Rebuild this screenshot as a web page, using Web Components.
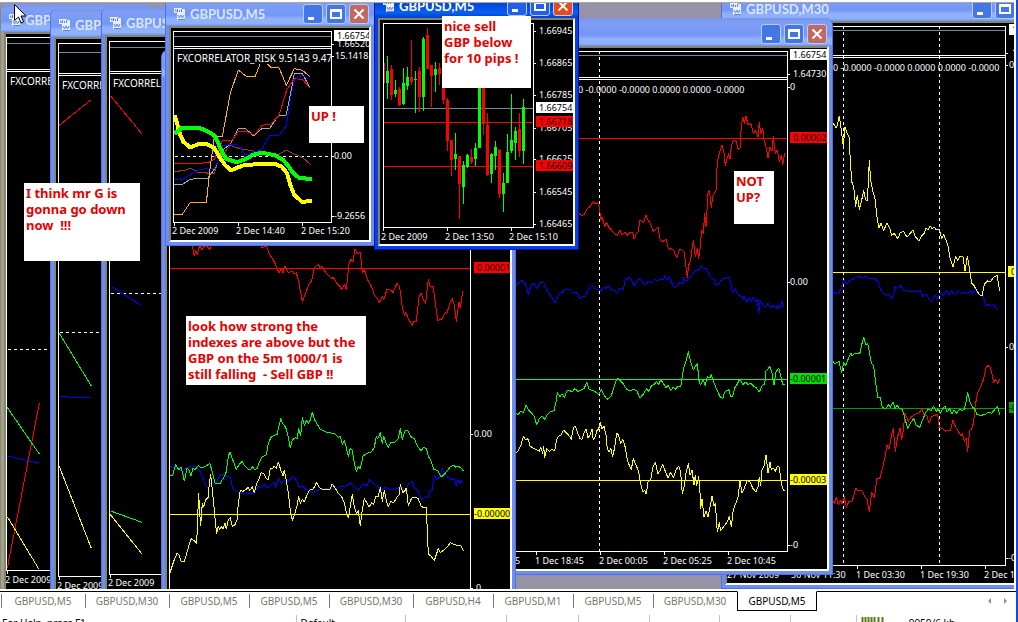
<!DOCTYPE html>
<html lang="en">
<head>
<meta charset="utf-8">
<title>Terminal</title>
<style>
	body {
		margin: 0;
		overflow: hidden;
		background: white;
		font-family: 'Noto Sans', 'Open Sans', sans-serif;
		font-size: 10px;
	}
</style>
</head>
<body>
<terminal-app></terminal-app>

<script>
const RED = '#ff0000';
const GREEN = '#00ff00';
const BLUE = '#0000ff';
const YELLOW = '#ffff00';
const SLATE = '#778899';

// points are in thirds of a pixel, counted from the origin ox,oy
function line(color, ox, oy, points, width = 1) {
	const path = points
		.trim()
		.split(/\s+/)
		.map((p) => {
			const [x, y] = p.split(',').map(Number);
			return `${(ox + x / 3).toFixed(1)},${(oy + y / 3).toFixed(1)}`;
		})
		.join(' ');
	return { color, path, width };
}

// plot: left, top, right, bottom of the framed area. split: y of the bar between the panes
const charts = {
	left1: {
		plot: [6, 37, 160, 570], split: 69, price: 43,
		header: [10, 82, 'FXCORRELATOR_RISK', 10],
		dashed: [349],
		dates: [[5, 580, '2 Dec 2009']],
		ticks: [7],
		lines: [
			line(RED, 0, 310, '22,775 118,280'),
			line(GREEN, 0, 310, '20,290 118,432'),
			line(BLUE, 0, 310, '22,438 120,460'),
			line(YELLOW, 0, 310, '22,620 117,778'),
		],
	},
	left2: {
		plot: [58, 43, 170, 576], split: 73, price: 52,
		header: [62, 86, 'FXCORRELATOR_RISK', 10],
		dashed: [332],
		dates: [[57, 586, '2 Dec 2009']],
		ticks: [59],
		lines: [
			line(RED, 0, 0, '178,376 272,300'),
			line(GREEN, 0, 310, '178,70 274,228'),
			line(BLUE, 0, 310, '178,260 274,264'),
			line(YELLOW, 0, 310, '176,465 274,715'),
		],
	},
	left3: {
		plot: [109, 41, 190, 574], split: 71, price: 47,
		header: [113, 84, 'FXCORRELATOR_RISK', 10],
		dashed: [293],
		dates: [[108, 583, '2 Dec 2009']],
		ticks: [110],
		lines: [
			line(RED, 0, 0, '332,288 426,402'),
			line(BLUE, 0, 0, '332,858 424,916'),
			line(GREEN, 0, 310, '332,603 426,637'),
			line(YELLOW, 0, 310, '328,610 426,732'),
		],
	},
	indexes: {
		plot: [169, 90, 470, 620],
		levels: [[268, RED], [514, YELLOW]],
		labels: [
			[473, 268, '0.00001', RED],
			[470, 434, '0.00'],
			[473, 514, '-0.00000', YELLOW],
			[472, 588, '0'],
		],
		lines: [
			line(RED, 165, 240, '82,15 88,48 92,30 97,44 104,14 110,30 120,15 135,28 140,12 160,-20 270,-20 285,10 290,22 306,20 312,40 325,60 332,75 342,98 348,88 354,98 360,78 370,98 382,94 388,102 394,98 402,130 412,184 422,160 432,132 440,122 448,84 456,76 461,74 466,84 470,78 482,98 500,116 505,112 515,130 524,138 530,150 538,132 544,148 552,72 558,58 564,66 570,26 578,42 586,36 592,98 598,88 608,120 620,140 628,165 636,174 644,188 652,168 656,180 666,148 676,150 684,158 696,130 704,142 712,200 718,226 722,218 732,240 742,256 746,244 754,246 762,172 768,160 774,178 782,190 790,118 796,140 804,138 810,180 818,242 832,236 840,218 846,220 854,190 862,176 868,196 874,244 882,186 886,204 893,154'),
			line(BLUE, 165, 400, '15,200 24,202 32,208 44,204 52,212 60,206 70,202 80,198 92,198 104,212 112,230 120,250 128,264 136,250 146,256 156,244 164,226 174,222 186,228 196,232 202,258 206,270 216,274 224,280 234,282 246,278 258,282 268,276 280,260 290,262 298,254 306,264 316,258 326,246 332,262 340,236 350,250 360,240 366,248 374,240 384,228 396,242 402,262 412,258 420,266 430,272 444,278 456,272 468,268 484,266 500,268 516,264 528,258 538,260 546,256 556,248 564,258 572,262 580,272 590,256 598,252 606,258 612,238 622,246 630,256 640,260 650,272 660,262 674,268 690,268 702,262 714,268 722,276 730,252 742,244 748,264 756,268 764,286 772,300 780,290 788,294 796,272 802,268 808,226 816,240 824,230 832,206 840,222 848,232 858,238 866,236 874,256 880,238 884,250 888,240 892,248'),
			line(GREEN, 165, 400, '15,225 22,228 32,194 42,210 48,200 58,243 66,205 72,210 78,228 84,203 90,210 100,196 108,204 124,198 134,190 142,215 150,250 164,252 178,230 184,215 190,170 195,155 202,176 214,208 224,192 232,184 238,196 248,206 256,210 262,200 268,208 276,206 282,190 290,172 298,168 304,164 310,130 318,112 326,106 336,104 347,56 354,72 362,82 370,112 376,144 382,120 392,112 396,118 401,86 407,108 412,52 418,76 424,62 430,70 436,60 442,36 448,58 456,72 466,88 480,95 494,98 510,102 520,112 526,108 532,134 538,122 544,142 550,170 556,145 562,150 568,190 574,214 580,200 586,206 594,168 606,160 620,155 628,142 634,110 638,116 646,98 652,132 656,108 662,126 670,142 678,126 690,126 700,116 706,86 712,118 720,92 728,92 738,110 748,116 758,140 768,152 776,142 784,146 790,168 798,184 806,208 818,212 828,232 842,218 856,200 866,196 872,202 880,198 890,206 896,214'),
			line(YELLOW, 165, 400, '15,518 26,484 36,460 42,466 48,484 58,486 66,456 78,416 84,420 90,424 95,432 98,350 101,280 104,340 107,378 112,310 116,320 122,300 130,292 133,250 137,224 142,270 148,330 152,378 155,402 160,378 164,388 170,380 174,388 180,370 184,386 190,360 196,352 202,380 210,374 216,360 220,310 226,272 234,274 244,268 250,262 254,272 262,260 268,278 276,248 282,236 288,218 296,220 302,234 310,240 316,204 322,206 328,198 334,206 340,186 348,212 354,228 358,210 364,240 370,280 376,330 382,362 390,338 396,318 401,290 406,310 412,298 418,306 426,285 434,270 444,268 450,258 455,246 462,262 472,268 484,268 494,268 502,252 510,264 520,280 530,290 538,308 544,338 550,354 556,320 562,282 568,320 574,340 580,332 586,378 592,330 598,296 606,310 612,322 620,308 626,314 632,288 640,290 646,262 652,304 658,270 664,302 670,320 678,304 686,308 696,292 702,286 706,254 714,278 720,272 724,264 730,318 740,294 750,292 760,296 768,318 776,324 784,322 790,462 798,468 808,482 820,446 826,458 836,450 842,446 856,428 868,434 880,436 888,438 896,454'),
		],
	},
	risk: {
		plot: [173, 31, 331, 222], split: 46, price: 36,
		header: [177, 59, 'FXCORRELATOR_RISK 9.5143 9.4731', 10],
		dashed: [156],
		labels: [
			[333, 44, '1.66520'],
			[333, 36, '1.66754', 'white'],
			[331, 56, '15.1418'],
			[330, 156, '0.00'],
			[333, 216, '-9.2656'],
		],
		dates: [[172, 231, '2 Dec 2009'], [236, 231, '2 Dec 14:40'], [301, 231, '2 Dec 15:20']],
		ticks: [174, 238, 302],
		lines: [
			line('#8b4513', 165, 0, '28,514 60,512 76,504 100,518 148,520 160,480 196,436 220,445 260,452 300,462 342,463 364,450 388,462 412,472 437,494'),
			line('#a9a9a9', 165, 0, '28,553 52,553 76,538 100,535 128,535 150,505 172,450 196,433 220,386 242,386 266,408 290,386 315,384 342,345 364,345 388,222 412,220 435,264'),
			line(RED, 165, 0, '28,490 76,492 100,490 130,488 148,478 172,422 200,422 220,394 245,394 268,405 292,376 318,372 342,346 366,268 388,236 412,238 435,264'),
			line(BLUE, 165, 0, '28,538 52,538 76,524 100,510 128,505 148,505 160,480 172,436 218,433 242,466 266,456 290,448 315,405 342,405 364,378 376,300 388,240 410,226 435,238'),
			line('#ffb020', 165, 0, '28,643 52,643 76,607 124,609 136,500 148,410 172,410 196,280 220,210 245,230 270,230 285,193'),
			line('#ffb020', 165, 0, '308,193 318,203 342,203 364,256 388,206 412,211 435,230'),
			line(YELLOW, 165, 0, '28,345 35,365 42,395 55,425 75,442 100,433 124,432 148,443 160,466 180,495 198,511 220,502 240,494 330,492 350,500 366,520 376,555 388,585 412,606 440,602', 4),
			line(GREEN, 165, 0, '28,402 50,384 104,384 130,395 150,408 160,430 172,458 184,476 215,487 240,478 265,464 292,458 330,466 355,480 370,498 384,518 402,534 440,537', 4),
		],
	},
	candles: {
		plot: [383, 23, 533, 227],
		levels: [[108, SLATE], [122, RED], [166, RED]],
		labels: [
			[535, 31, '1.66945'],
			[535, 63, '1.66865'],
			[535, 95, '1.66785'],
			[535, 128, '1.66705'],
			[535, 159, '1.66625'],
			[535, 192, '1.66545'],
			[535, 224, '1.66465'],
			[535, 108, '1.66754', 'white'],
			[535, 122, '1.66718', RED],
			[535, 166, '1.66609', RED],
		],
		dates: [[381, 237, '2 Dec 2009'], [445, 237, '2 Dec 13:50'], [509, 237, '2 Dec 15:10']],
		ticks: [383, 447, 511],
		// x, high, low, body top, body bottom, rising
		candles: [
			[34, 176, 270, 190, 250, 0], [46, 168, 298, 214, 250, 1], [58, 195, 300, 207, 286, 0],
			[70, 240, 290, 270, 282, 1], [82, 262, 318, 268, 316, 0], [94, 204, 315, 250, 313, 1],
			[106, 202, 270, 230, 256, 1], [118, 120, 256, 230, 244, 0], [130, 212, 338, 238, 241, 1],
			[142, 200, 335, 213, 292, 0], [154, 110, 332, 116, 290, 1], [166, 85, 208, 104, 206, 0],
			[178, 195, 320, 195, 228, 0], [190, 186, 276, 207, 224, 1], [202, 188, 255, 205, 222, 0],
			[214, 220, 314, 250, 300, 0], [226, 295, 455, 300, 424, 0], [238, 420, 528, 420, 480, 0],
			[250, 398, 508, 462, 478, 1], [262, 468, 658, 468, 552, 0], [274, 484, 612, 494, 560, 1],
			[286, 462, 504, 464, 500, 1], [298, 448, 494, 472, 486, 0], [310, 430, 500, 444, 478, 1],
			[322, 200, 444, 200, 444, 1], [334, 200, 404, 200, 372, 0], [346, 338, 526, 375, 526, 0],
			[358, 460, 550, 462, 522, 1], [370, 422, 510, 440, 468, 1], [382, 448, 596, 450, 582, 0],
			[394, 520, 636, 548, 582, 1], [406, 402, 548, 456, 548, 1], [418, 282, 458, 420, 453, 1],
			[430, 380, 478, 392, 428, 1], [442, 338, 470, 386, 453, 0], [454, 298, 492, 322, 453, 1],
		],
		lines: [],
	},
	main: {
		plot: [420, 51, 787, 551], split: 77, price: 55,
		header: [578, 90, '0 -0.0000 -0.0000 0.0000 0.0000 -0.0000', 9],
		levels: [[138, RED], [379, GREEN], [480, YELLOW]],
		days: [599],
		labels: [
			[789, 55, '1.66754', 'white'],
			[789, 74, '1.64730'],
			[786, 87, '0'],
			[789, 138, '0.00002', RED],
			[786, 282, '0.00'],
			[789, 379, '-0.00001', '#00e000'],
			[789, 480, '-0.00003', YELLOW],
			[789, 545, '-0'],
		],
		dates: [[515, 561, '5'], [535, 561, '1 Dec 18:45'], [599, 561, '2 Dec 00:05'], [663, 561, '2 Dec 05:25'], [727, 561, '2 Dec 10:45']],
		ticks: [536, 600, 664, 728],
		lines: [
			line(RED, 510, 190, '206,70 214,76 222,74 232,56 240,50 250,34 256,42 262,38 268,50 272,90 276,80 284,110 290,96 296,112 304,120 312,130 322,136 330,120 336,136 344,126 352,136 360,128 368,128 372,148 378,132 384,126 390,90 396,92 400,98 408,76 414,90 422,102 430,124 438,118 444,112 450,148 456,156 462,152 468,148 474,172 480,180 484,174 492,184 500,204 508,180 514,178 522,186 528,230 532,262 536,226 542,210 546,178 550,152 556,200 562,176 566,206 572,160 574,122 580,130 584,70 588,110 594,10 598,0 604,54 608,20 618,0 622,-84 628,-110 636,-136 642,-112 646,-74 650,-90 656,-110 660,-92 664,-130 670,-150 678,-146 684,-122 690,-126 694,-190 698,-218 703,-200 708,-222 714,-196 722,-200 730,-170 738,-178 744,-160 748,-204 752,-168 758,-184 762,-150 768,-130 774,-96 780,-130 786,-116 790,-160 796,-110 802,-120 808,-84 814,-104 818,-76 824,-112'),
			line(BLUE, 510, 190, '16,292 24,280 36,272 46,282 56,314 62,286 72,280 80,296 92,276 102,278 112,304 122,316 130,332 136,338 142,324 148,306 156,308 164,298 174,300 182,298 190,310 202,306 210,328 218,318 226,320 234,300 246,284 256,296 264,300 274,302 280,292 288,296 296,288 302,298 314,302 322,310 328,296 340,298 346,270 356,262 364,268 372,288 382,272 392,264 398,278 406,284 414,274 424,278 434,268 444,272 452,268 460,270 464,256 472,270 476,260 484,276 492,292 500,290 510,276 516,282 520,262 526,274 536,268 548,252 556,240 564,242 572,226 580,236 588,234 596,250 604,266 612,268 618,284 626,284 636,266 648,264 658,262 662,282 668,308 674,296 682,310 690,316 698,328 702,318 710,336 718,322 724,336 730,322 736,336 742,328 746,372 750,330 758,344 766,352 774,340 782,354 790,346 798,358 804,344 808,356 814,350 816,332 822,352'),
			line(GREEN, 510, 370, '16,128 24,134 32,124 40,128 48,106 56,120 64,128 72,138 80,164 88,146 96,138 104,148 112,134 120,126 132,122 138,96 142,68 150,80 156,72 164,82 170,64 178,60 186,66 194,56 204,64 214,60 222,56 230,38 238,58 250,62 260,68 266,74 274,58 282,76 292,88 304,78 312,50 322,24 330,32 340,42 350,58 360,62 370,58 380,62 390,84 400,72 410,56 416,64 424,48 432,44 440,34 446,44 452,30 460,40 468,54 474,46 482,62 490,52 498,58 504,48 512,50 518,10 522,-8 528,-26 535,-55 542,-24 550,0 562,-20 568,40 572,44 580,30 586,46 592,20 600,24 604,14 612,38 620,58 630,80 638,86 644,66 650,62 656,58 662,80 668,78 674,54 682,42 690,26 698,44 706,36 714,44 722,40 730,48 738,52 748,66 756,48 764,42 768,4 774,-4 779,-10 786,8 792,44 798,6 806,-6 812,16 818,44 824,44'),
			line(YELLOW, 510, 370, '16,252 24,244 32,228 40,200 48,210 54,206 60,228 68,234 78,238 88,244 92,232 98,250 101,230 104,262 110,236 118,244 126,238 134,242 140,208 146,198 154,194 160,180 168,188 176,196 184,208 190,174 196,168 202,186 210,206 216,208 222,188 228,176 234,204 240,196 246,176 250,210 256,200 260,182 266,176 271,158 276,178 282,168 288,196 292,236 298,246 302,234 308,260 314,232 320,190 326,196 332,222 338,208 346,232 352,270 358,286 364,298 370,266 378,286 386,304 390,334 398,366 404,362 409,372 414,336 422,328 428,294 436,276 444,312 450,302 458,282 466,304 474,324 482,306 490,324 498,300 506,288 512,308 517,372 522,350 528,310 535,280 540,316 546,300 552,344 556,316 560,346 566,320 570,368 572,416 576,386 582,442 588,424 594,440 600,412 606,378 612,408 616,400 622,486 628,458 632,482 642,468 650,458 658,440 664,470 670,420 678,398 684,380 690,332 696,370 704,352 712,330 720,336 728,354 738,366 744,350 748,322 752,348 756,300 762,288 768,254 774,310 780,276 784,298 790,294 796,304 802,288 808,292 814,340 820,360 824,362'),
		],
	},
	half: {
		plot: [730, 26, 1005, 565], split: 55, price: 30,
		header: [833, 68, '0 -0.0000 -0.0000 0.0000 0.0000 -0.0000', 9],
		levels: [[272, YELLOW], [408, '#00a000']],
		days: [843, 939],
		labels: [
			[1008, 30, '1.66754', 'white'],
			[1008, 53, '1.64730'],
			[1005, 65, '0'],
			[1007, 272, '0.00001', YELLOW],
			[1005, 347, '0.00'],
			[1008, 408, '-0.00001', '#00a000'],
			[1007, 558, '-0'],
		],
		dates: [[727, 575, '27 Nov 2009'], [791, 575, '30 Nov 11:30'], [856, 575, '1 Dec 03:30'], [920, 575, '1 Dec 19:30'], [984, 575, '2 Dec 11:30']],
		ticks: [857, 921, 985],
		lines: [
			line(BLUE, 715, 0, '352,872 360,880 370,882 378,866 386,840 394,852 404,842 414,838 424,832 434,828 440,836 450,830 464,836 478,834 488,844 494,862 502,878 514,886 522,882 530,896 536,884 540,860 548,866 556,856 564,870 576,872 590,876 606,874 616,872 624,890 634,882 644,900 650,906 660,886 668,896 676,880 684,888 694,872 702,884 710,872 720,886 730,872 740,880 748,876 758,882 766,872 774,880 780,866 788,884 800,886 808,900 812,916 822,914 830,920 836,912 842,924 848,928'),
			line(RED, 715, 310, '352,570 358,580 364,562 370,584 376,570 382,582 388,560 394,592 402,574 410,576 416,560 422,534 428,542 440,540 450,562 456,566 463,606 470,546 478,564 486,504 494,506 502,478 510,440 516,404 522,418 530,372 535,356 541,424 548,380 555,354 560,388 565,362 570,310 580,334 590,320 602,312 612,310 620,296 628,316 636,318 642,340 650,320 660,316 668,312 673,352 682,356 692,364 700,360 706,362 714,330 722,352 730,364 738,378 742,370 748,394 753,384 758,424 764,360 770,358 776,336 780,290 788,248 798,228 806,206 812,176 818,166 826,172 832,196 836,218 842,208 848,220 854,208'),
			line(GREEN, 715, 310, '352,152 358,160 366,158 372,154 380,188 386,158 392,166 400,146 408,130 412,138 420,130 434,132 440,104 446,82 452,104 458,100 464,132 470,162 476,168 482,220 488,262 496,262 502,292 512,296 520,284 526,292 534,276 540,296 546,286 554,296 562,298 570,326 578,356 588,336 596,326 604,346 614,352 624,326 632,308 640,298 648,302 656,288 664,304 670,298 676,312 682,298 690,288 696,306 704,296 710,312 718,300 724,310 734,298 740,302 748,298 752,280 758,248 764,274 772,290 780,298 786,314 800,316 812,312 820,306 830,310 838,300 848,288 850,300 854,314'),
			line(YELLOW, 715, 0, '352,368 358,374 364,384 368,372 373,348 380,400 385,440 390,380 396,400 402,410 406,480 410,545 416,560 422,620 427,585 433,628 440,600 446,572 452,600 457,602 460,550 463,482 467,540 474,575 480,596 486,650 492,685 498,668 506,692 516,668 524,684 530,706 538,700 548,716 556,698 566,694 576,712 584,702 594,690 600,708 612,724 620,708 628,700 632,684 640,690 645,678 652,686 657,680 664,690 673,688 680,716 686,704 694,722 700,742 706,778 714,802 722,768 728,782 736,768 744,770 750,814 757,768 764,810 770,850 778,858 786,874 796,886 802,886 808,852 818,842 826,846 836,832 846,826 850,848 854,872'),
		],
	},
};

class PriceChart extends HTMLElement {
	constructor() {
		super();
		this.attachShadow({ mode: 'open' });
	}

	connectedCallback() {
		const chart = charts[this.getAttribute('chart')];
		this.shadowRoot.innerHTML = `
			<style>
				:host {
					display: block;
					height: 100%;
					overflow: hidden;
					background: black;
				}
				svg {
					display: block;
					shape-rendering: crispEdges;
				}
				text {
					font-size: 9px;
					fill: white;
				}
				.tag {
					fill: black;
				}
			</style>
			<svg width="100%" height="100%" viewBox="${this.getAttribute('view')}" preserveAspectRatio="xMinYMin slice">
				${this.#plot(chart)}
				${this.#axis(chart)}
			</svg>
			`;
	}

	#plot(chart) {
		const [left, top, right, bottom] = chart.plot;
		let out = '';
		(chart.levels || []).forEach(([y, color]) => {
			out += `<rect x="${left}" y="${y}" width="${right - left}" height="1" fill="${color}"/>`;
		});
		(chart.dashed || []).forEach((y) => {
			out += `<path d="M${left + 2} ${y}.5H${right}" stroke="white" stroke-dasharray="3 3"/>`;
		});
		(chart.days || []).forEach((x) => {
			out += `<path d="M${x}.5 ${top}V${bottom}" stroke="white" stroke-dasharray="3 3"/>`;
		});
		if (chart.price) {
			out += `<rect x="${left}" y="${chart.price}" width="${right - left}" height="1" fill="${SLATE}"/>`;
		}
		(chart.candles || []).forEach(([x, high, low, open, close, up]) => {
			const cx = Math.round(372 + x / 3);
			const color = up ? GREEN : RED;
			out += `<rect x="${cx}" y="${Math.round(high / 3)}" width="1" height="${Math.round((low - high) / 3)}" fill="${color}"/>`;
			out += `<rect x="${cx - 1}" y="${Math.round(open / 3)}" width="3" height="${Math.round((close - open) / 3)}" fill="${color}"/>`;
		});
		chart.lines.forEach(({ color, path, width }) => {
			out += `<polyline points="${path}" fill="none" stroke="${color}" stroke-width="${width}" stroke-linejoin="round"/>`;
		});
		if (chart.header) {
			const [x, y, text, size] = chart.header;
			out += `<text x="${x}" y="${y + 3}" style="font-size:${size}px">${text}</text>`;
		}
		// a nested svg keeps the drawing inside the frame
		return `<svg x="${left}" y="${top}" width="${right - left}" height="${bottom - top}" viewBox="${left} ${top} ${right - left} ${bottom - top}">${out}</svg>`;
	}

	#axis(chart) {
		const [left, top, right, bottom] = chart.plot;
		let out = `<path d="M${left}.5 ${top}.5H${right}.5V${bottom}.5H${left}.5Z" fill="none" stroke="white"/>`;
		if (chart.split) {
			out += `<rect x="${left}" y="${chart.split}" width="${right - left}" height="1" fill="white"/>`;
			out += `<rect x="${left}" y="${chart.split + 2}" width="${right - left}" height="1" fill="white"/>`;
		}
		(chart.ticks || []).forEach((x) => {
			out += `<rect x="${x}" y="${bottom}" width="1" height="4" fill="white"/>`;
		});
		(chart.labels || []).forEach(([x, y, text, color]) => {
			if (color) {
				out += `<rect x="${x + 1}" y="${y - 6}" width="37" height="11" fill="${color}"/>`;
			} else {
				out += `<rect x="${right}" y="${y}" width="3" height="1" fill="white"/>`;
			}
			out += `<text class="${color ? 'tag' : ''}" x="${x + (text[0] === '-' ? 1 : 4)}" y="${y + 3}">${text}</text>`;
		});
		(chart.dates || []).forEach(([x, y, text]) => {
			out += `<text x="${x}" y="${y + 3}">${text}</text>`;
		});
		return out;
	}
}

class ChartWindow extends HTMLElement {
	constructor() {
		super();
		this.attachShadow({ mode: 'open' });
	}

	connectedCallback() {
		// x, y are counted from the top of the page, the desktop begins 3px lower
		const [x, y, w, h] = this.getAttribute('box').split(' ').map(Number);
		this.style.left = x + 'px';
		this.style.top = y - 3 + 'px';
		this.style.width = w + 'px';
		this.style.height = h + 'px';
		this.shadowRoot.innerHTML = `
			<style>
				:host {
					--frame: #6b8ef5;
					--edge: #5570d8;
					--bar: linear-gradient(#7895ea, #7f9ff5 20%, #7396f8 60%, #8fb2fc 75%, #8fb0fb 92%, #6b8ef5);
					--close: #c26a62;
					--button: #4376e6;
					--title: #dbe6fa;
					position: absolute;
					display: flex;
					flex-direction: column;
					box-sizing: border-box;
					border: 1px solid var(--edge);
					border-top: 0;
					border-radius: 7px 7px 0 0;
					padding: 0 3px 3px;
					background: var(--frame);
					overflow: hidden;
				}
				:host([active]) {
					--frame: #0a3fe6;
					--edge: #0018a8;
					--bar: linear-gradient(#0a50e8, #0346dd 50%, #0560f5 80%, #0340c8);
					--close: #e8491f;
					--button: #2060ea;
					--title: white;
				}
				header {
					display: flex;
					align-items: center;
					gap: 3px;
					height: 28px;
					margin: 0 -3px;
					padding: 3px 5px 0 7px;
					box-sizing: border-box;
					background: var(--bar);
				}
				h2 {
					flex: 1;
					margin: 0;
					overflow: hidden;
					white-space: nowrap;
					font: bold 13px/20px Lato, sans-serif;
					color: var(--title);
				}
				.icon {
					flex: none;
				}
				button {
					display: flex;
					flex: none;
					width: 20px;
					height: 20px;
					padding: 0;
					border: 1px solid #b9cbf7;
					border-radius: 3px;
					background: var(--button);
				}
				.close {
					background: var(--close);
				}
				.client {
					flex: 1;
					min-height: 0;
					border: 2px solid white;
					border-top-color: #85846c;
					border-left-color: #85846c;
				}
			</style>
			<header>
				<svg class="icon" width="14" height="14" viewBox="0 0 14 14">
					<path d="M1 1h8v1h3v11H4V6H1z" fill="#e9effc"/>
					<path d="M2 3h1v2M4.500 2v3M6.500 3v2M8.500 2v3M5 8l1.500 3L8 8l1.500 3L11 8M5 12.500h7" fill="none" stroke="#5d80d8"/>
				</svg>
				<h2>${this.getAttribute('caption') || ''}</h2>
				<button aria-label="Minimize"><svg width="18" height="18"><path d="M4 12h6v3H4z" fill="white"/></svg></button>
				<button aria-label="Maximize"><svg width="18" height="18"><path d="M3 4h12v10H3zM5 7v5h8V7z" fill="white" fill-rule="evenodd"/></svg></button>
				<button class="close" aria-label="Close"><svg width="18" height="18"><path d="M4.500 4.500l9 9M13.500 4.500l-9 9" stroke="white" stroke-width="2"/></svg></button>
			</header>
			<div class="client"><price-chart chart="${this.getAttribute('chart')}" view="${x + 6} ${y + 30} ${w - 12} ${h - 36}"></price-chart></div>
			`;
	}
}

class NoteBox extends HTMLElement {
	constructor() {
		super();
		this.attachShadow({ mode: 'open' });
		this.shadowRoot.innerHTML = `
			<style>
				:host {
					position: absolute;
					box-sizing: border-box;
					padding: 2px;
					background: white;
					color: #e60000;
					font-size: 13px;
					font-weight: bold;
					line-height: 16px;
				}
				p {
					margin: 0;
					white-space: pre;
				}
			</style>
			<p><slot></slot></p>
			`;
	}
}

class ChartTabs extends HTMLElement {
	constructor() {
		super();
		this.attachShadow({ mode: 'open' });
	}

	connectedCallback() {
		const tabs = this.getAttribute('tabs').split(' ');
		this.shadowRoot.innerHTML = `
			<style>
				:host {
					display: flex;
					align-items: flex-start;
					margin-top: 2px;
					border-top: 1px solid black;
					padding-left: 1px;
				}
				button {
					box-sizing: border-box;
					min-width: 80px;
					height: 18px;
					padding: 0 10px;
					border: 0;
					background: linear-gradient(#77776a, #77776a) 0 2px / 1px 14px no-repeat;
					font: inherit;
					line-height: 18px;
					color: #77776a;
				}
				.wide {
					min-width: 84px;
				}
				.current {
					margin-top: -1px;
					height: 20px;
					border: 1px solid black;
					border-top-color: white;
					background: white;
					color: black;
				}
				.scroll {
					display: flex;
					gap: 5px;
					margin-left: auto;
					padding-right: 4px;
				}
				.scroll button {
					min-width: 12px;
					padding: 0;
					background: none;
				}
			</style>
			${tabs.map((t, i) => `<button class="${this.#kind(t, i, tabs.length)}">${t}</button>`).join('')}
			<div class="scroll">
				<button aria-label="Scroll left"><svg width="6" height="8"><path d="M5 1v6L2 4z" fill="#8c8cb4"/></svg></button>
				<button aria-label="Scroll right"><svg width="6" height="8"><path d="M1 1v6l3-3z" fill="#8c8cb4"/></svg></button>
			</div>
			`;
	}

	#kind(tab, i, count) {
		if (i === count - 1) return 'current';
		return i === 0 || tab.endsWith('M30') ? 'wide' : '';
	}
}

class StatusBar extends HTMLElement {
	constructor() {
		super();
		this.attachShadow({ mode: 'open' });
		this.shadowRoot.innerHTML = `
			<style>
				:host {
					display: grid;
					grid-template-columns: 295fr 109fr 101fr 72fr 71fr 70fr 70fr 66fr 160fr;
					margin-top: 4px;
					line-height: 14px;
				}
				span {
					padding: 1px 0 0 4px;
					border-left: 1px solid #c4c2b4;
				}
				span:first-of-type {
					padding-left: 2px;
					border: 0;
				}
				span:last-of-type {
					display: flex;
					gap: 25px;
				}
				svg {
					margin-top: 1px;
				}
			</style>
			<span>For Help, press F1</span><span>Default</span><span></span><span></span><span></span><span></span><span></span><span></span>
			<span>
				<svg width="23" height="12"><path d="M1.500 0v12M4.500 0v12M7.500 0v12M10.500 0v12M13.500 0v12M17.500 0v12M21.500 0v12" stroke="#5a7a10" stroke-width="2"/></svg>
				9959/6 kb
			</span>
			`;
	}
}

class TerminalApp extends HTMLElement {
	constructor() {
		super();
		this.attachShadow({ mode: 'open' });
		this.shadowRoot.innerHTML = `
			<style>
				:host {
					display: block;
					height: 100vh;
					overflow: hidden;
					box-sizing: border-box;
					border-right: 2px solid #1048e8;
				}
				main {
					position: relative;
					height: calc(100vh - 36px);
					margin-right: 2px;
					border-top: 1px solid #aca899;
					margin-top: 2px;
					background: #9693a6;
					overflow: hidden;
				}
				.behind {
					--frame: #a3a08c;
					--edge: #8b8974;
				}
				.cursor {
					position: absolute;
					left: 14px;
					top: 1px;
				}
			</style>
			<main>
				<chart-window class="behind" box="0 4 152 620" caption="GBPUSD,M5" chart="left1"></chart-window>
				<chart-window box="50 9 170 620" caption="GBPUSD,M30" chart="left2"></chart-window>
				<chart-window box="101 7 180 620" caption="GBPUSD,M5" chart="left3"></chart-window>
				<chart-window box="721 -7 323 596" caption="GBPUSD,M30" chart="half"></chart-window>
				<chart-window box="400 18 433 557" chart="main"></chart-window>
				<chart-window box="161 50 355 620" chart="indexes"></chart-window>
				<chart-window box="165 -2 210 248" caption="GBPUSD,M5" chart="risk"></chart-window>
				<chart-window box="374 -10 205 260" caption="GBPUSD,M5" chart="candles" active></chart-window>
				<note-box style="left:24px;top:180px;width:116px;height:78px">I think mr G is
gonna go down
now  !!!</note-box>
				<note-box style="left:186px;top:313px;width:180px;height:69px">look how strong the
indexes are above but the
GBP on the 5m 1000/1 is
still falling  - Sell GBP !!</note-box>
				<note-box style="left:309px;top:103px;width:55px;height:37px">UP !</note-box>
				<note-box style="left:442px;top:13px;width:89px;height:72px">nice sell
GBP below
for 10 pips !</note-box>
				<note-box style="left:734px;top:168px;width:40px;height:53px">NOT
UP?</note-box>
				<svg class="cursor" width="13" height="21" viewBox="0 0 13 21">
					<path d="M.5.500v16l4-3.500 2.500 6 2.500-1-2.500-6h5z" fill="white" stroke="black"/>
				</svg>
			</main>
			<chart-tabs tabs="GBPUSD,M5 GBPUSD,M30 GBPUSD,M5 GBPUSD,M5 GBPUSD,M30 GBPUSD,H4 GBPUSD,M1 GBPUSD,M5 GBPUSD,M30 GBPUSD,M5"></chart-tabs>
			<status-bar></status-bar>
			`;
	}
}

customElements.define('price-chart', PriceChart);
customElements.define('chart-window', ChartWindow);
customElements.define('note-box', NoteBox);
customElements.define('chart-tabs', ChartTabs);
customElements.define('status-bar', StatusBar);
customElements.define('terminal-app', TerminalApp);
</script>
</body>
</html>
